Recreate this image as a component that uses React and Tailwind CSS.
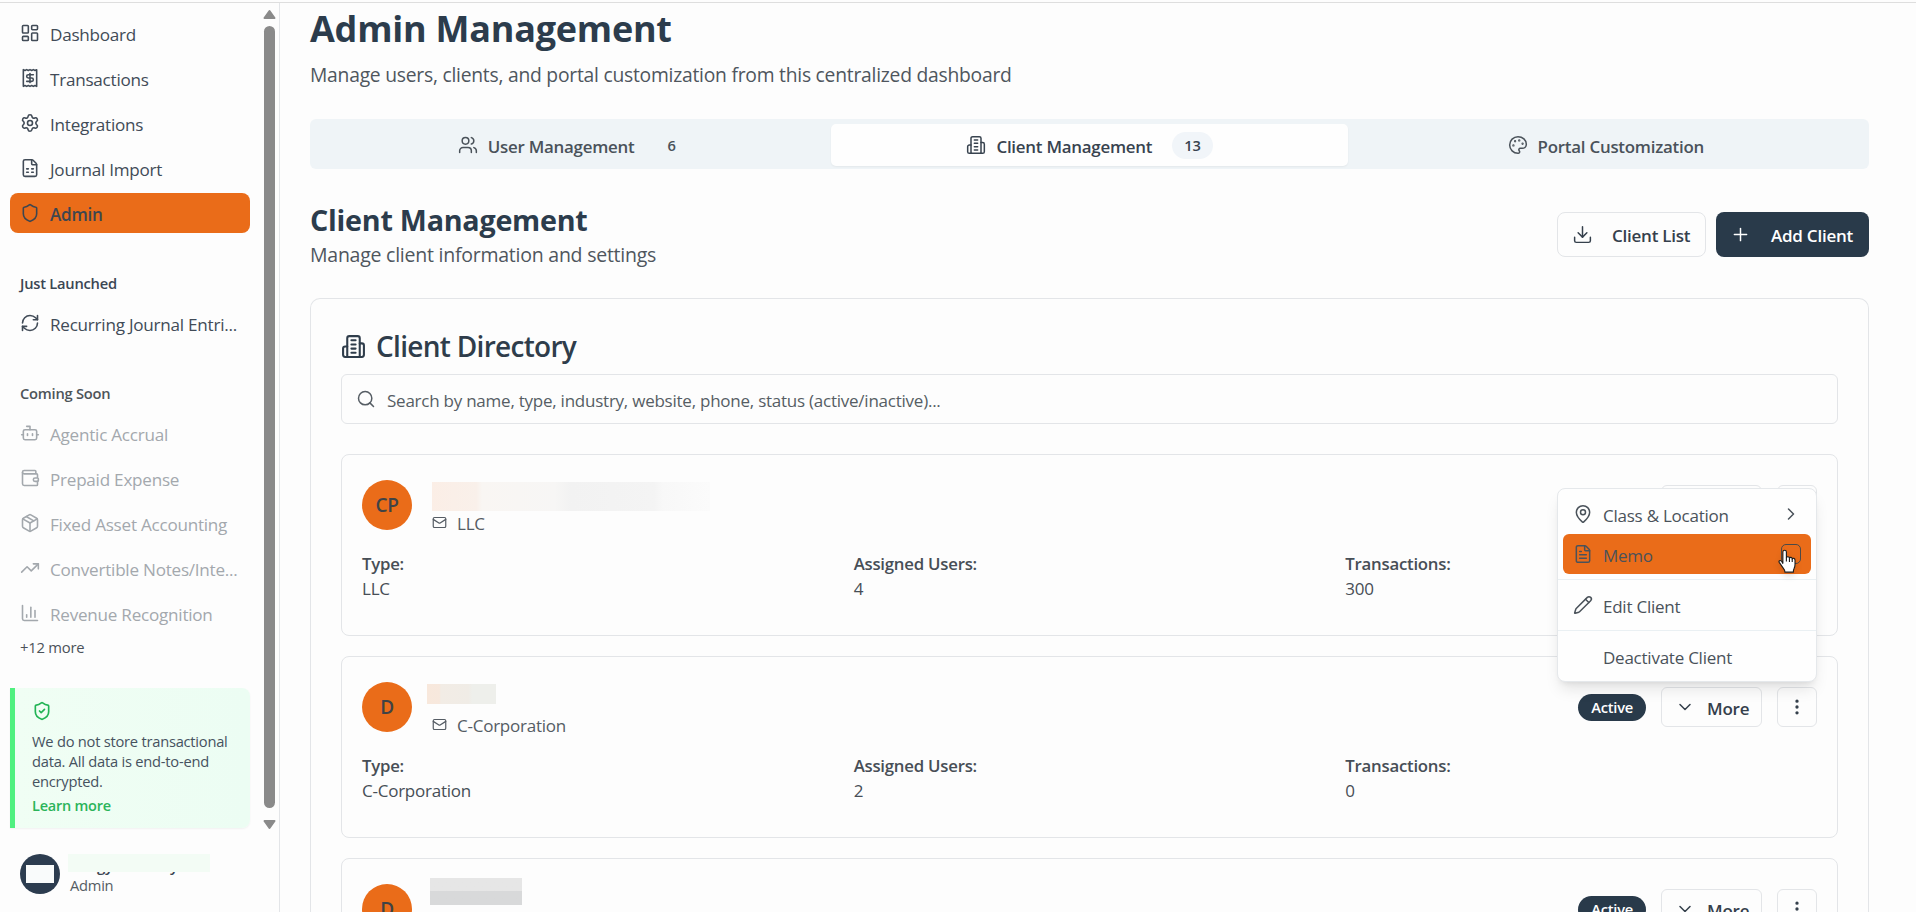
import {
  Bot,
  ChartColumn,
  ChevronDown,
  ChevronRight,
  Download,
  EllipsisVertical,
  FileSpreadsheet,
  FileText,
  LayoutDashboard,
  Mail,
  MapPin,
  Package,
  Palette,
  Pencil,
  Plus,
  Receipt,
  RefreshCw,
  Search,
  Settings,
  Shield,
  ShieldCheck,
  TrendingUp,
  Users,
  Wallet,
} from 'lucide-react'

const mainNav = [
  { label: 'Dashboard', icon: LayoutDashboard },
  { label: 'Transactions', icon: Receipt },
  { label: 'Integrations', icon: Settings },
  { label: 'Journal Import', icon: FileSpreadsheet },
  { label: 'Admin', icon: Shield, active: true },
]

const comingSoon = [
  { label: 'Agentic Accrual', icon: Bot },
  { label: 'Prepaid Expense', icon: Wallet },
  { label: 'Fixed Asset Accounting', icon: Package },
  { label: 'Convertible Notes/Inte...', icon: TrendingUp },
  { label: 'Revenue Recognition', icon: ChartColumn },
]

const clients = [
  {
    id: 1,
    initials: 'CP',
    type: 'LLC',
    users: 4,
    transactions: 300,
    mask: 'mt-0.5 h-[29px] w-[278px] bg-[linear-gradient(90deg,#fbeee6_0%,#f9f0ea_16%,#f9f6f3_18%,#f7f6f5_44%,#f2f2f2_50%,#f4f4f4_80%,#f8f8f8_83%,#fbfbfb_100%)]',
  },
  {
    id: 2,
    initials: 'D',
    type: 'C-Corporation',
    users: 2,
    transactions: 0,
    mask: '-ml-[5px] mt-0.5 h-[20px] w-[69px] bg-[linear-gradient(90deg,#f8e8dc_0%,#f7e8dd_18%,#f2ece5_20%,#f0ece6_60%,#eeefeb_66%)]',
  },
  {
    id: 3,
    initials: 'D',
    type: 'C-Corporation',
    users: 1,
    transactions: 0,
    mask: '-ml-0.5 -mt-[6px] h-[27px] w-[92px] bg-linear-to-b from-[#e6e6e6] from-50% to-[#d8d9da] to-50%',
  },
]

function Building({ size, strokeWidth = 2 }) {
  return (
    <svg width={size} height={size} viewBox="0 0 24 24" fill="none" stroke="currentColor" strokeWidth={strokeWidth} strokeLinecap="round" strokeLinejoin="round" className="shrink-0">
      <path d="M6 22V4a2 2 0 0 1 2-2h8a2 2 0 0 1 2 2v18Z" />
      <path d="M6 12H4a2 2 0 0 0-2 2v6a2 2 0 0 0 2 2h2" />
      <path d="M18 9h2a2 2 0 0 1 2 2v9a2 2 0 0 1-2 2h-2" />
      <path d="M10 6h4M10 10h4M10 14h4M10 18h4" />
    </svg>
  )
}

function NavItem({ label, icon: Icon, active, muted }) {
  return (
    <a
      className={`flex h-10 items-center gap-2.5 rounded-lg pl-2.5 text-[17.1px] ${
        active ? 'bg-[#ea6c19] font-semibold text-[#3d4650]' : muted ? 'text-[#a3a8ad]' : 'text-[#414b57]'
      }`}
    >
      <Icon size={20} strokeWidth={1.9} className="shrink-0" />
      <span className="whitespace-nowrap pt-[3px]">{label}</span>
    </a>
  )
}

function Sidebar() {
  return (
    <aside className="flex w-[280px] shrink-0 border-r border-[#e3e5e8]">
      <div className="flex w-[263px] flex-col pl-2.5 pr-[13px] pt-2.5">
        <nav className="flex flex-col gap-[5px]">
          {mainNav.map((item) => (
            <NavItem key={item.label} {...item} />
          ))}
        </nav>

        <h3 className="mb-2.5 mt-10 pl-2.5 text-[14.7px] font-semibold leading-5 text-[#3b4653]">Just Launched</h3>
        <NavItem label="Recurring Journal Entri..." icon={RefreshCw} />

        <h3 className="mb-2.5 mt-10 pl-2.5 text-[14.7px] font-semibold leading-5 text-[#4d5459]">Coming Soon</h3>
        <div className="flex flex-col gap-[5px]">
          {comingSoon.map((item) => (
            <NavItem key={item.label} {...item} muted />
          ))}
        </div>
        <p className="mt-1 pl-2.5 text-[14.8px] leading-5 text-[#4b5259]">+12 more</p>

        <div className="mt-[31px] h-[140px] rounded-r-lg border-l-[5px] border-[#4ff07f] bg-linear-to-r from-[#f0fef4] to-[#ecfdf3] pl-[17px] pt-[13px] shadow-xs">
          <ShieldCheck size={20} className="text-[#22b455]" />
          <p className="mt-2.5 whitespace-nowrap text-[14.7px] leading-5 text-[#46525f]">
            We do not store transactional
            <br />
            data. All data is end-to-end
            <br />
            encrypted.
          </p>
          <a className="mt-[5px] block text-[14.5px] font-semibold leading-5 text-[#2bb45a]">Learn more</a>
        </div>

        <div className="mt-[26px] flex items-start gap-2 pl-2.5">
          <div className="flex size-10 shrink-0 items-center justify-center rounded-full bg-[#2c3c4f]">
            <div className="h-[18px] w-7 bg-[#f9fbfb]" />
          </div>
          <div>
            <div className="relative h-[21px] w-[142px] overflow-hidden text-[15px] font-semibold leading-[25px] text-[#3a4552]">
              <span className="pl-[29px]">gy</span>
              <span className="pl-[57px]">y</span>
              <div className="absolute inset-x-0 top-0 h-[18px] bg-[#f3fcf5]" />
            </div>
            <p className="pl-0.5 text-[14.7px] leading-5 text-[#555c63]">Admin</p>
          </div>
        </div>
      </div>

      {/* scroll bar */}
      <div className="flex flex-col items-center pt-1.5">
        <svg width="13" height="11" viewBox="0 0 13 11" fill="#8a8a8a" stroke="#8a8a8a" strokeWidth="2" strokeLinejoin="round">
          <path d="M6.5 2 11.5 9H1.5Z" />
        </svg>
        <div className="mt-1.5 h-[782px] w-[11px] rounded-full bg-[#8a8a8a]" />
        <svg className="mt-[11px]" width="13" height="11" viewBox="0 0 13 11" fill="#8a8a8a" stroke="#8a8a8a" strokeWidth="2" strokeLinejoin="round">
          <path d="M6.5 9 1.5 2H11.5Z" />
        </svg>
      </div>
    </aside>
  )
}

function Tabs() {
  return (
    <div className="mt-[29px] grid h-[50px] shrink-0 grid-cols-3 rounded-md bg-[#eff4f7] p-[5px] pb-[3px] text-[16.9px] font-semibold text-[#4a525a]">
      <div className="flex items-center justify-center gap-2.5">
        <Users size={20} strokeWidth={1.8} />
        <span className="pt-[3px]">User Management</span>
        <span className="ml-2.5 px-[13px] text-[14.7px]">6</span>
      </div>
      <div className="flex items-center justify-center gap-2.5 rounded-[5px] bg-[#fefefe] text-[#38434f] shadow-xs">
        <Building size={20} strokeWidth={1.8} />
        <span className="pt-[3px]">Client Management</span>
        <span className="ml-2.5 rounded-full bg-[#f1f5f9] px-[12px] py-[3.5px] text-[14.7px] leading-5">13</span>
      </div>
      <div className="flex items-center justify-center gap-2.5">
        <Palette size={20} strokeWidth={1.8} />
        <span className="pt-[3px]">Portal Customization</span>
      </div>
    </div>
  )
}

// hand pointer over the highlighted menu row
function Pointer() {
  return (
    <svg className="absolute left-[219px] top-[60px] drop-shadow-md" width="21" height="25" viewBox="0 0 22 27" fill="#fff" stroke="#1b1b1b" strokeWidth="1.2" strokeLinejoin="round">
      <path d="M6 15.5V3.2a1.9 1.9 0 0 1 3.8 0v6.3c.3-1.6 3.2-1.5 3.3.5.6-1.5 3-1.2 3 .7.7-1.1 3-.8 3 1.3V17c0 2-.5 3-1.2 4.500-.5 1-.6 2-.6 3.500H8.300c0-1.800-.8-2.900-1.900-4.300-1.300-1.700-2.300-3.400-4.200-6-1.100-1.600.8-3.100 2.300-1.700Z" />
      <path d="M9.800 9.500v4M13.100 10v4M16.100 10.700V14" fill="none" />
    </svg>
  )
}

function ActionsMenu() {
  return (
    <div className="absolute right-0 top-[8px] z-10 w-[260px] rounded-lg border border-[#e5e8eb] bg-[#fefefe] p-[5px] text-[17px] text-[#4a525a] shadow-lg">
      <div className="flex h-10 items-center gap-2.5 px-2.5">
        <MapPin size={20} strokeWidth={1.8} />
        <span className="pt-[3px]">Class &amp; Location</span>
        <ChevronRight size={20} strokeWidth={1.8} className="ml-auto" />
      </div>
      <div className="flex h-10 items-center gap-2.5 rounded-md bg-[#ea6c19] px-2.5">
        <FileText size={20} strokeWidth={1.8} />
        <span className="pt-[3px]">Memo</span>
        <span className="ml-auto size-5 rounded-[5px] border border-[#4b4a48]" />
      </div>
      <div className="-mx-[5px] my-[5px] h-px bg-[#eaf0f3]" />
      <div className="flex h-10 items-center gap-2.5 px-2.5">
        <Pencil size={20} strokeWidth={1.8} />
        <span className="pt-[3px]">Edit Client</span>
      </div>
      <div className="-mx-[5px] my-[5px] h-px bg-[#eaf0f3]" />
      <div className="flex h-10 items-center pl-10">
        <span className="pt-[3px]">Deactivate Client</span>
      </div>
      <Pointer />
    </div>
  )
}

function Field({ label, value }) {
  return (
    <div className="text-[17px] leading-[25px] text-[#474e56]">
      <div className="text-[16.8px] font-semibold">{label}</div>
      <div>{value}</div>
    </div>
  )
}

function ClientCard({ client, menuOpen }) {
  return (
    <div className="h-[182px] shrink-0 rounded-lg border border-[#e3e5e8] px-5 pt-[25px]">
      <div className="flex h-[50px] gap-5">
        <div className="flex size-[50px] items-center justify-center rounded-full bg-[#ea6c19] pt-px text-[19px] font-semibold text-[#3f4346]">
          {client.initials}
        </div>
        <div className="flex flex-col">
          <div className="h-[29px] shrink-0">
            <div className={client.mask} />
          </div>
          <div className="flex items-center gap-2.5 text-[17px] leading-[25px] text-[#555c64]">
            <Mail size={15} strokeWidth={1.9} />
            <span className="pt-0.5">{client.type}</span>
          </div>
        </div>
        <div className="relative ml-auto flex items-center gap-[15px]">
          <span className="rounded-full bg-[#293a4a] px-[13px] py-[3.5px] text-[14.7px] font-semibold leading-5 text-white">Active</span>
          <button className="flex h-10 w-[101px] items-center rounded-md border border-[#e3e5e8] pl-[13px] text-[17px] font-semibold text-[#35404c]">
            <ChevronDown size={20} strokeWidth={1.8} />
            <span className="ml-3 pt-[3px]">More</span>
          </button>
          <button className="flex size-10 items-center justify-center rounded-md border border-[#e3e5e8] text-[#35404c]">
            <EllipsisVertical size={20} />
          </button>
          {menuOpen && <ActionsMenu />}
        </div>
      </div>
      <div className="mt-[21px] grid grid-cols-3 gap-5">
        <Field label="Type:" value={client.type} />
        <Field label="Assigned Users:" value={client.users} />
        <Field label="Transactions:" value={client.transactions} />
      </div>
    </div>
  )
}

export default function App() {
  return (
    <div className="h-[912px] overflow-hidden bg-[#fdfdfd] font-['Open_Sans','Noto_Sans',sans-serif] tracking-[-0.015em]">
      <div className="h-[3px] border-b border-[#dedede]" />
      <div className="flex h-[909px]">
        <Sidebar />
        <main className="flex min-w-0 flex-1 flex-col pl-[30px] pr-[47px]">
          <h1 className="mt-[3px] text-[36px] font-bold leading-[45px] text-[#2c3c4c]">Admin Management</h1>
          <p className="mt-[9px] text-[19.3px] leading-[30px] text-[#4f565d]">
            Manage users, clients, and portal customization from this centralized dashboard
          </p>

          <Tabs />

          <div className="mt-[32px] flex items-start justify-between">
            <div>
              <h2 className="text-[28.7px] font-bold leading-[38px] text-[#2c3c4c]">Client Management</h2>
              <p className="text-[19.5px] leading-[31px] text-[#4f565d]">Manage client information and settings</p>
            </div>
            <div className="mt-[11px] flex gap-2.5 text-[17px] font-semibold">
              <button className="flex h-[45px] w-[149px] items-center rounded-lg border border-[#e3e5e8] pl-[14px] text-[#35404c]">
                <Download size={21} strokeWidth={1.7} />
                <span className="ml-[19px] pt-[3px]">Client List</span>
              </button>
              <button className="flex h-[45px] w-[153px] items-center rounded-lg bg-[#293a4a] pl-[14px] text-white">
                <Plus size={21} strokeWidth={1.7} />
                <span className="ml-5 pt-[3px]">Add Client</span>
              </button>
            </div>
          </div>

          <section className="mt-[28px] flex flex-col rounded-t-[10px] border border-b-0 border-[#e3e5e8] px-[30px] pt-[29px]">
            <h3 className="flex items-center gap-2.5 text-[28px] font-semibold leading-[37px] tracking-[-0.025em] text-[#2f3d4b]">
              <Building size={25} />
              Client Directory
            </h3>
            <div className="mt-[9px] flex h-[50px] items-center gap-[11px] rounded-md border border-[#e3e5e8] pl-3.5 text-[17px] text-[#565d64]">
              <Search size={20} strokeWidth={1.8} />
              <span className="pt-[3px]">Search by name, type, industry, website, phone, status (active/inactive)...</span>
            </div>
            <div className="mt-[30px] flex flex-col gap-5">
              {clients.map((client, i) => (
                <ClientCard key={client.id} client={client} menuOpen={i === 0} />
              ))}
            </div>
          </section>
        </main>
      </div>
    </div>
  )
}
